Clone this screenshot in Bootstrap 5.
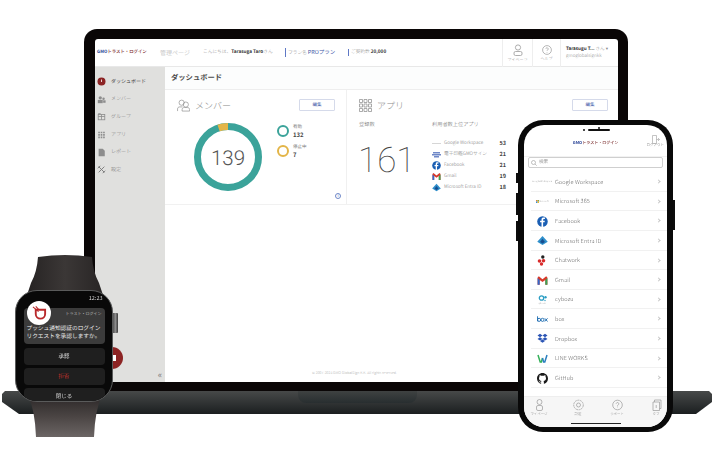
<!DOCTYPE html>
<html lang="ja"><head><meta charset="utf-8">
<link href="https://cdn.jsdelivr.net/npm/bootstrap@5.3.0/dist/css/bootstrap.min.css" rel="stylesheet">
<style>
html,body{margin:0;background:#fff;overflow:hidden}
body{font-family:"Noto Sans CJK JP","Noto Sans",sans-serif;color:#555;text-rendering:geometricPrecision}
.stage{position:relative;width:714px;height:466px;overflow:hidden;filter:blur(.25px)}
.lap-lid{position:absolute;left:84px;top:29px;width:544px;height:362px;background:#0a0606;border-radius:13px 13px 0 0;padding:10px 10px 9px 11px}
.lap-screen{height:100%;background:#fff;border-radius:3px 3px 0 0;overflow:hidden;display:flex;flex-direction:column}
.lap-base{position:absolute;left:2px;top:391px;width:710px;height:23px;background:linear-gradient(#474949,#1b1f20);clip-path:polygon(3px 0,707px 0,710px 3px,710px 11px,694px 23px,17px 23px,0 11px,0 3px)}
.lap-notch{width:119px;height:12px;margin:0 auto;background:linear-gradient(#3f4242,#282e30);border-radius:0 0 8px 8px}
.top-bar{height:28px;flex:none;display:flex;align-items:center;border-bottom:1px solid #e8e8e8;font-size:4.7px;color:#8a8a8a;white-space:nowrap;font-weight:300;position:relative}
.logo-txt{font-weight:500;color:#7a2a2a;white-space:nowrap}
.logo-txt b{color:#243f94;font-weight:700}
.bar-logo{margin-left:2px;width:50px;font-size:4.4px}
.bar-title{margin-left:13px;width:43px;font-size:6px;color:#aaa}
.bar-hello{width:82px}
.bar-plan{width:63px}
.lab-bar{border-left:1.5px solid #5f78c5;padding-left:2px}
.strong-dark{color:#333;font-weight:700}
.top-tool{height:28px;border-left:1px solid #eee;display:flex;flex-direction:column;align-items:center;justify-content:center;gap:1px;font-size:4px}
.tool-wide{width:30px}
.tool-mid{width:28px}
.tool-user{display:block;width:58px;padding:7px 0 0 5px;line-height:7px;font-size:4.6px}
.body-row{flex:1;display:flex;min-height:0}
.side-nav{width:70px;flex:none;background:#e0e0de;position:relative;padding-top:5.5px}
.nav-line{height:17.7px;display:flex;align-items:center;padding-left:2px;gap:5px;font-size:5px;color:#777;font-weight:300}
.nav-line svg{width:9px;height:9px;flex:none}
.collapse-mark{position:absolute;right:3px;bottom:3px;font-size:9px;line-height:1;color:#777}
.main-pane{flex:1;display:flex;flex-direction:column;min-width:0;position:relative}
.title-strip{height:23px;flex:none;background:#fcfdfd;border-bottom:1px solid #eee;font-size:7.3px;font-weight:700;color:#4a4a4a;display:flex;align-items:center;padding-left:6px}
.panels{height:115px;flex:none;display:flex;border-bottom:1.5px solid #f1f1f1}
.panel-a{width:182px;border-right:1px solid #f0f0f0;position:relative}
.panel-b{flex:1;position:relative}
.pan-head{display:flex;align-items:center;gap:5px;font-size:9px;color:#888;font-weight:300;position:absolute;left:12px;top:9px}
.edit-btn{position:absolute;top:9px;width:36px;height:12px;border:1px solid #d5daea;border-radius:1px;font-size:4.5px;color:#3d56a6;display:flex;align-items:center;justify-content:center;background:#fff}
.donut{position:absolute;left:28px;top:32px;width:70px;height:70px}
.stat-line{position:absolute;left:112px;display:flex;gap:4px;align-items:center;font-size:4.5px;line-height:8px;color:#777}
.stat-line b{display:block;font-size:6px;color:#444}
.ring-dot{width:12px;height:12px;border-radius:50%;border:2.5px solid}
.info-dot{position:absolute;right:5px;bottom:5px;width:6px;height:6px;border:.7px solid #6f88c8;border-radius:50%;font-size:4px;line-height:4.500px;color:#5f78c5;text-align:center}
.cap-txt{position:absolute;font-size:5.2px;color:#666;font-weight:300}
.big-num{position:absolute;left:11px;top:53px;font-family:Roboto,sans-serif;font-size:35px;line-height:1;font-weight:100;color:#444}
.top-apps{position:absolute;left:85px;top:48px;width:74px}
.app-line{height:11px;display:flex;align-items:center;font-size:4.7px;color:#777;gap:3px;white-space:nowrap;font-weight:300}
.app-line svg{width:9px;height:9px;flex:none}
.app-line b{margin-left:auto;font-size:5.5px;color:#444;font-weight:700}
.copy-txt{position:absolute;left:147px;bottom:6px;font-size:3.6px;color:#aaa;white-space:nowrap;font-weight:300}
.chat-bubble{position:absolute;left:101px;top:347px;width:22px;height:22px;border-radius:50%;background:#8c2424;display:flex;align-items:center;justify-content:center}
.chat-bubble i{display:block;width:8px;height:6px;background:#fff}
.phone{position:absolute;left:518px;top:120px;width:155px;height:312px;background:#090909;border-radius:25px;padding:5px 6px}
.phone-key{position:absolute;background:#0c0c0c;width:2px}
.phone-screen{height:100%;background:#fff;border-radius:20px;overflow:hidden;display:flex;flex-direction:column;position:relative}
.ph-top{height:32px;flex:none;position:relative;text-align:center;border-bottom:1px solid #f2f2f2}
.ph-speaker{position:absolute;left:64px;top:4px;width:22px;height:2px;background:#111;border-radius:1px}
.ph-cam{position:absolute;width:2px;height:2px;background:#111;border-radius:50%}
.ph-logo{position:absolute;left:0;width:143px;top:14.5px;font-size:4px;line-height:7px}
.ph-out{position:absolute;right:3px;top:10px;font-size:3.5px;color:#999;text-align:center;line-height:4px}
.ph-search{margin:0 4px;height:11px;flex:none;border:1px solid #cfcfcf;border-radius:2px;display:flex;align-items:center;gap:2px;padding-left:2px;font-size:4.5px;color:#999}
.ph-list{margin:4px 0 0 7px;flex:1;display:block}
.ph-row{height:19.65px;display:flex;align-items:center;padding-top:1px;border-bottom:1px solid #f1f1f1;font-size:5.6px;letter-spacing:.1px;color:#666;position:relative;font-weight:300}
.ph-ico{width:24px;flex:none;padding-right:2px;display:flex;justify-content:center;align-items:center;white-space:nowrap}
.ph-ico svg{width:11px;height:11px}
.ph-mini{font-size:2.4px;color:#777;letter-spacing:0}
.ph-stack{display:flex;flex-direction:column;align-items:center;line-height:2.500px}
.ph-chev{position:absolute;right:7px;top:8px;width:3px;height:3px;border-top:.8px solid #c5c5c5;border-right:.8px solid #c5c5c5;transform:rotate(45deg)}
.ph-tabs{height:31px;flex:none;background:#f6f6f6;border-top:1px solid #eee;display:flex;padding:2px 0 0;position:relative}
.ph-tab{display:flex;flex-direction:column;align-items:center;font-size:3.4px;line-height:5px;color:#888;width:39px;flex:none;font-weight:300}
.ph-tab:first-child{margin-left:-4.5px}
.ph-tab svg{width:11px;height:12px}
.ph-home{position:absolute;left:47px;bottom:3px;width:50px;height:1.5px;background:#222}
.band{position:absolute;left:0;top:250px;width:130px;height:190px}
.watch{position:absolute;left:15px;top:290px;width:98px;height:112px;border-radius:22px;background:#090909;border:1.5px solid #5a5b5b;padding:3px 7.500px;overflow:hidden;color:#fff}
.crown{position:absolute;left:113px;top:313px;width:5px;height:20px;background:linear-gradient(90deg,#555,#8a8a8a,#3a3a3a);border-radius:0 1px 1px 0}
.w-time{text-align:right;font-size:5.5px;line-height:8px;padding-right:2px;color:#ddd}
.w-card{background:#3b3b3b;border-radius:4px;height:36px;margin-top:5.500px;font-size:5.7px;line-height:8px;padding:16px 0 0 3px;position:relative;white-space:nowrap;color:#eee;font-weight:400}
.w-app{position:absolute;right:3px;top:3px;font-size:4px;line-height:6px;color:#bbb}
.w-logo{position:absolute;left:27px;top:301px;width:24px;height:24px;border-radius:50%;background:#fff;display:flex;align-items:center;justify-content:center}
.w-btn{height:17px;background:#1f1f1f;border-radius:4px;margin-top:3px;font-size:5.5px;display:flex;align-items:center;justify-content:center;color:#ddd}
.w-btn.reject{color:#c0302a}
</style></head><body>
<div class="stage">
  <div class="lap-lid"><div class="lap-screen">
    <div class="top-bar">
      <span class="logo-txt bar-logo"><b>GMO</b>トラスト・ログイン</span>
      <span class="bar-title">管理ページ</span>
      <span class="bar-hello">こんにちは、<span class="strong-dark">Tarasuga Taro</span>さん</span>
      <span class="bar-plan lab-bar">プラン名 <b style="color:#3d56a6;font-size:5.5px">PROプラン</b></span>
      <span class="lab-bar">ご契約数 <b class="strong-dark">20,000</b></span>
      <div class="ms-auto d-flex h-100">
        <div class="top-tool tool-wide"><svg width="10" height="12" viewBox="0 0 10 12" fill="none" stroke="#999" stroke-width=".8"><circle cx="5" cy="3.500" r="2.600"/><rect x="1" y="7.500" width="8" height="4" rx="1.500"/></svg>マイページ</div>
        <div class="top-tool tool-mid"><svg width="10" height="10" viewBox="0 0 10 10" fill="none" stroke="#999" stroke-width=".7"><circle cx="5" cy="5" r="4.400"/><path d="M3.800 3.900a1.200 1.200 0 1 1 1.800 1.100c-.5.300-.6.500-.6 1"/><path d="M5 7v.6"/></svg>ヘルプ</div>
        <div class="top-tool tool-user"><span class="strong-dark">Tarasugu T...</span> さん ▾<br>gmoglobalsignkk</div>
      </div>
    </div>
    <div class="body-row">
      <div class="side-nav">
        <div class="nav-line"><svg viewBox="0 0 9 9"><circle cx="4.500" cy="4.500" r="4" fill="#8c2424"/><path d="M4.500 2.500v2.500" stroke="#fff" stroke-width=".8"/></svg><b style="color:#444">ダッシュボード</b></div>
        <div class="nav-line"><svg viewBox="0 0 11 11" fill="#8d8d8d"><circle cx="4" cy="3.500" r="2"/><circle cx="8" cy="4.500" r="1.500"/><rect x="1" y="6" width="6" height="4"/><rect x="7.500" y="6.500" width="3" height="3"/></svg>メンバー</div>
        <div class="nav-line"><svg viewBox="0 0 11 11" fill="none" stroke="#8d8d8d"><rect x="1.500" y="3" width="8" height="6.500"/><path d="M1.500 5.500h8M5.500 3v6.500M1.500 2h3"/></svg>グループ</div>
        <div class="nav-line"><svg viewBox="0 0 11 11" fill="#8d8d8d"><path d="M1.500 2h2v2h-2zM4.500 2h2v2h-2zM7.500 2h2v2h-2zM1.500 5h2v2h-2zM4.500 5h2v2h-2zM7.500 5h2v2h-2zM1.500 8h2v2h-2zM4.500 8h2v2h-2zM7.500 8h2v2h-2z"/></svg>アプリ</div>
        <div class="nav-line"><svg viewBox="0 0 11 11" fill="#8d8d8d"><path d="M2 1h5l2.500 2.500V10H2z"/></svg>レポート</div>
        <div class="nav-line"><svg viewBox="0 0 11 11" fill="none" stroke="#777" stroke-width="1.100"><path d="M2 2l7 7M9 2L2 9M1 4l3-3M7 10l3-3"/></svg>設定</div>
        <span class="collapse-mark">«</span>
      </div>
      <div class="main-pane">
        <div class="title-strip">ダッシュボード</div>
        <div class="panels">
          <div class="panel-a">
            <div class="pan-head"><svg width="13" height="13" viewBox="0 0 14 14" fill="none" stroke="#888" stroke-width=".7"><circle cx="5" cy="4" r="2.800"/><circle cx="9.500" cy="6" r="2.800"/><path d="M.6 13v-2.200c0-1.500 1-2.300 2.400-2.300h3M5.500 13v-1.500c0-1.500 1-2.300 2.400-2.300h3.300c1.400 0 2.400.8 2.400 2.300V13z"/></svg>メンバー</div>
            <span class="edit-btn" style="left:134px">編集</span>
            <svg class="donut" viewBox="0 0 70 70"><circle cx="35" cy="35" r="30.500" fill="none" stroke="#3ba39a" stroke-width="7"/><circle cx="35" cy="35" r="30.500" fill="none" stroke="#e3b548" stroke-width="7" pathLength="139" stroke-dasharray="7 132" transform="rotate(-108 35 35)"/><text x="35" y="42.500" text-anchor="middle" font-family="Roboto,sans-serif" font-weight="300" font-size="20.500" fill="#555">139</text></svg>
            <div class="stat-line" style="top:33px"><span class="ring-dot" style="border-color:#3ba39a"></span><span>有効<b>132</b></span></div>
            <div class="stat-line" style="top:53px"><span class="ring-dot" style="border-color:#e3b548"></span><span>停止中<b>7</b></span></div>
            <span class="info-dot">i</span>
          </div>
          <div class="panel-b">
            <div class="pan-head"><svg width="13" height="13" viewBox="0 0 13 13" fill="none" stroke="#888" stroke-width=".7"><path d="M.5.500h3v3h-3zM5 .5h3v3H5zM9.500.5h3v3h-3zM.5 5h3v3h-3zM5 5h3v3H5zM9.500 5h3v3h-3zM.5 9.500h3v3h-3zM5 9.500h3v3H5zM9.500 9.500h3v3h-3z"/></svg>アプリ</div>
            <span class="edit-btn" style="left:225px">編集</span>
            <span class="cap-txt" style="left:12px;top:31px">登録数</span>
            <span class="cap-txt" style="left:85px;top:31px">利用者数上位アプリ</span>
            <span class="big-num">161</span>
            <div class="top-apps">
              <div class="app-line"><svg viewBox="0 0 9 9"><path d="M0 4.500h9" stroke="#bbb" stroke-width=".6"/></svg>Google Workspace<b>53</b></div>
              <div class="app-line"><svg viewBox="0 0 9 9" fill="#6f88c8"><rect x="1" y="2" width="7" height="1.500"/><rect x="0" y="4" width="9" height="1.500"/><rect x="2" y="6" width="5" height="1.500"/></svg>電子印鑑GMOサイン<b>21</b></div>
              <div class="app-line"><svg viewBox="0 0 9 9"><circle cx="4.500" cy="4.500" r="4.300" fill="#1a5fb4"/><path d="M5 9V5.200h1.200l.2-1.300H5v-.8c0-.4.200-.7.700-.7h.8V1.300C5 1 3.700 1.100 3.700 2.900v1H2.500v1.300h1.200V9z" fill="#fff"/></svg>Facebook<b>21</b></div>
              <div class="app-line"><svg viewBox="0 0 9 9"><path d="M.5 2v6h1.700V4L4.500 5.800 6.800 4v4h1.700V2L7.500 1 4.500 3.500 1.500 1z" fill="#d93a2b"/><path d="M.5 8h1.700V4L.5 2.500z" fill="#3468c8"/><path d="M6.800 8h1.700V2.500L6.800 4z" fill="#3aa356"/></svg>Gmail<b>19</b></div>
              <div class="app-line"><svg viewBox="0 0 9 9"><path d="M4.500 .8 8.800 5.600 4.500 8.200.2 5.600z" fill="#2f8fcb"/><path d="M4.500 3 6.500 5.700 4.500 7 2.500 5.700z" fill="#174d8f"/></svg>Microsoft Entra ID<b>18</b></div>
            </div>
          </div>
        </div>
        <span class="copy-txt">© 2007-2024 GMO GlobalSign K.K. All rights reserved.</span>
      </div>
    </div>
  </div></div>
  <div class="lap-base"><div class="lap-notch"></div></div>
  <div class="chat-bubble"><i></i></div>

  <svg class="band" viewBox="0 0 130 190"><defs><linearGradient id="bandTop" x1="0" x2="1" y1="0" y2="0"><stop offset="0" stop-color="#262323"/><stop offset=".5" stop-color="#3b3736"/><stop offset="1" stop-color="#282525"/></linearGradient><linearGradient id="bandLow" x1="0" x2="0" y1="0" y2="1"><stop offset="0" stop-color="#2a2626"/><stop offset=".5" stop-color="#4a4443"/><stop offset="1" stop-color="#6b6564"/></linearGradient></defs><path d="M38 7Q65 3 92 7Q93 22 99 33L103 45H27L31 33Q37 22 38 7z" fill="url(#bandTop)"/><path d="M28 145H102Q95 160 94 187H36Q35 160 28 145z" fill="url(#bandLow)"/></svg>
  <div class="crown"></div>
  <div class="watch">
    <div class="w-time">12:23</div>
    <div class="w-card"><span class="w-app">トラスト・ログイン</span>プッシュ通知認証のログイン<br>リクエストを承認しますか。</div>
    <div class="w-btn mt-1">承認</div>
    <div class="w-btn reject">拒否</div>
    <div class="w-btn">閉じる</div>
  </div>
  <div class="w-logo"><svg width="15" height="15" viewBox="0 0 16 16"><path d="M4 4h10v4.500a5 5 0 0 1-10 0z" fill="none" stroke="#b8282a" stroke-width="2"/><path d="M1 1l6 5M4 .5l3 3" stroke="#b8282a" stroke-width="1.200"/></svg></div>

  <div class="phone-key" style="left:516px;top:173px;height:10px"></div>
  <div class="phone-key" style="left:516px;top:193px;height:22px"></div>
  <div class="phone-key" style="left:516px;top:221px;height:20px"></div>
  <div class="phone-key" style="left:673px;top:200px;height:30px"></div>
  <div class="phone"><div class="phone-screen">
    <div class="ph-top">
      <span class="ph-cam" style="left:59px;top:4px"></span><span class="ph-cam" style="left:74px;top:1.500px"></span><span class="ph-speaker"></span>
      <div class="ph-logo logo-txt"><b>GMO</b>トラスト・ログイン</div>
      <div class="ph-out"><svg class="d-block mx-auto" width="9" height="9" viewBox="0 0 9 9" fill="none" stroke="#aaa" stroke-width=".7"><path d="M1.500.5h4v8h-4zM5.500 4.500h3M7 3l1.500 1.500L7 6"/></svg>ログアウト</div>
    </div>
    <div class="ph-search"><svg width="6" height="6" viewBox="0 0 6 6" fill="none" stroke="#999" stroke-width=".6"><circle cx="2.500" cy="2.500" r="2"/><path d="M4 4l1.700 1.700"/></svg>検索</div>
    <div class="ph-list">
      <div class="ph-row"><span class="ph-ico ph-mini">Google Workspace</span>Google Workspace<i class="ph-chev"></i></div>
      <div class="ph-row"><span class="ph-ico ph-mini"><svg style="width:3px;height:3px" viewBox="0 0 4 4"><path d="M0 0h2v2H0z" fill="#e7793a"/><path d="M2 0h2v2H2z" fill="#7cb342"/><path d="M0 2h2v2H0z" fill="#2f8fe0"/><path d="M2 2h2v2H2z" fill="#f3b92e"/></svg>Microsoft</span>Microsoft 365<i class="ph-chev"></i></div>
      <div class="ph-row"><span class="ph-ico"><svg viewBox="0 0 9 9"><circle cx="4.500" cy="4.500" r="4.300" fill="#1a5fb4"/><path d="M5 9V5.200h1.200l.2-1.300H5v-.8c0-.4.200-.7.700-.7h.8V1.300C5 1 3.700 1.100 3.700 2.900v1H2.500v1.300h1.200V9z" fill="#fff"/></svg></span>Facebook<i class="ph-chev"></i></div>
      <div class="ph-row"><span class="ph-ico"><svg viewBox="0 0 9 9"><path d="M4.500 .8 8.800 5.600 4.500 8.200.2 5.600z" fill="#2f8fcb"/><path d="M4.500 3 6.500 5.700 4.500 7 2.500 5.700z" fill="#174d8f"/></svg></span>Microsoft Entra ID<i class="ph-chev"></i></div>
      <div class="ph-row"><span class="ph-ico"><svg viewBox="0 0 11 11"><circle cx="5.800" cy="2" r="1.700" fill="#222"/><circle cx="2.500" cy="6" r="1.800" fill="#d92b2b"/><circle cx="6.500" cy="5.800" r="1.800" fill="#d92b2b"/><circle cx="4.500" cy="9" r="1.700" fill="#d92b2b"/></svg></span>Chatwork<i class="ph-chev"></i></div>
      <div class="ph-row"><span class="ph-ico"><svg viewBox="0 0 9 9"><path d="M.5 2v6h1.700V4L4.500 5.800 6.800 4v4h1.700V2L7.500 1 4.500 3.500 1.500 1z" fill="#d93a2b"/><path d="M.5 8h1.700V4L.5 2.500z" fill="#3468c8"/><path d="M6.800 8h1.700V2.500L6.800 4z" fill="#3aa356"/></svg></span>Gmail<i class="ph-chev"></i></div>
      <div class="ph-row"><span class="ph-ico ph-mini ph-stack"><svg style="width:9px;height:7px" viewBox="0 0 9 7"><circle cx="3.500" cy="3" r="2.200" fill="none" stroke="#2c9ec4" stroke-width="1.300"/><circle cx="7.500" cy="2.200" r="1.200" fill="#2c9ec4"/><circle cx="7" cy="5.500" r=".7" fill="#2c9ec4"/></svg>cybozu</span>cybozu<i class="ph-chev"></i></div>
      <div class="ph-row"><span class="ph-ico"><svg viewBox="0 0 12 8" fill="none" stroke="#1b6bb0" stroke-width="1"><path d="M.6 .5v5.500"/><circle cx="2.300" cy="4.400" r="1.700"/><circle cx="6" cy="4.400" r="1.700"/><path d="M8.500 2.700l3 3.500M11.500 2.700l-3 3.500"/></svg></span>box<i class="ph-chev"></i></div>
      <div class="ph-row"><span class="ph-ico"><svg viewBox="0 0 11 11" fill="#2b55b5"><path d="M3 .8 5.500 2.500 3 4.200.5 2.500zM8 .8l2.500 1.700L8 4.200 5.500 2.500zM3 4.200l2.500 1.700L3 7.600.5 5.900zM8 4.200l2.500 1.700L8 7.600 5.500 5.900zM3 8l2.500-1.600L8 8l-2.500 1.800z"/></svg></span>Dropbox<i class="ph-chev"></i></div>
      <div class="ph-row"><span class="ph-ico"><svg viewBox="0 0 11 11"><path d="M1 2l2.200 7h1.200L5.500 5" fill="none" stroke="#35b05a" stroke-width="1.500"/><path d="M5.500 5l1.100 4h1.200L10 2" fill="none" stroke="#2a7fc0" stroke-width="1.500"/></svg></span>LINE WORKS<i class="ph-chev"></i></div>
      <div class="ph-row"><span class="ph-ico"><svg viewBox="0 0 16 16"><path fill="#1b1b1b" d="M8 0C3.580 0 0 3.580 0 8c0 3.540 2.290 6.530 5.470 7.590.4.070.55-.17.55-.38 0-.19-.01-.82-.01-1.490-2.010.37-2.530-.49-2.690-.94-.09-.23-.48-.94-.82-1.130-.28-.15-.68-.52-.01-.53.63-.01 1.080.58 1.230.82.720 1.210 1.870.87 2.330.66.070-.52.280-.87.510-1.070-1.780-.2-3.640-.89-3.640-3.950 0-.87.310-1.590.820-2.150-.080-.2-.360-1.020.080-2.120 0 0 .670-.21 2.200.82.640-.18 1.320-.27 2-.27.680 0 1.360.09 2 .27 1.530-1.040 2.200-.82 2.200-.82.440 1.100.160 1.920.080 2.120.510.560.820 1.270.820 2.150 0 3.070-1.870 3.750-3.650 3.950.290.250.540.730.540 1.480 0 1.070-.010 1.930-.010 2.200 0 .210.150.460.550.380A8.013 8.013 0 0016 8c0-4.420-3.580-8-8-8z"/></svg></span>GitHub<i class="ph-chev"></i></div>
    </div>
    <div class="ph-tabs">
      <div class="ph-tab"><svg viewBox="0 0 11 12" fill="none" stroke="#999" stroke-width=".7"><circle cx="5.500" cy="3" r="2.500"/><rect x="2.500" y="6.500" width="6" height="5" rx="1.500"/></svg>マイページ</div>
      <div class="ph-tab"><svg viewBox="0 0 11 12" fill="none" stroke="#999" stroke-width=".7"><circle cx="5.500" cy="6" r="4.800" stroke-dasharray="2 .6"/><circle cx="5.500" cy="6" r="2"/></svg>設定</div>
      <div class="ph-tab"><svg viewBox="0 0 11 12" fill="none" stroke="#999" stroke-width=".7"><circle cx="5.500" cy="6" r="4.800"/><path d="M4.200 4.800a1.300 1.300 0 1 1 2 1.100c-.5.300-.7.500-.7 1M5.500 7.600v.7"/></svg>サポート</div>
      <div class="ph-tab"><svg viewBox="0 0 11 12" fill="none" stroke="#999" stroke-width=".7"><path d="M2 3h6.500v8.500H2zM3.500 3V1H10v8.500H8.500"/><path d="M5.200 6v3"/></svg>タブ</div>
      <span class="ph-home"></span>
    </div>
  </div></div>
</div>
</body></html>
